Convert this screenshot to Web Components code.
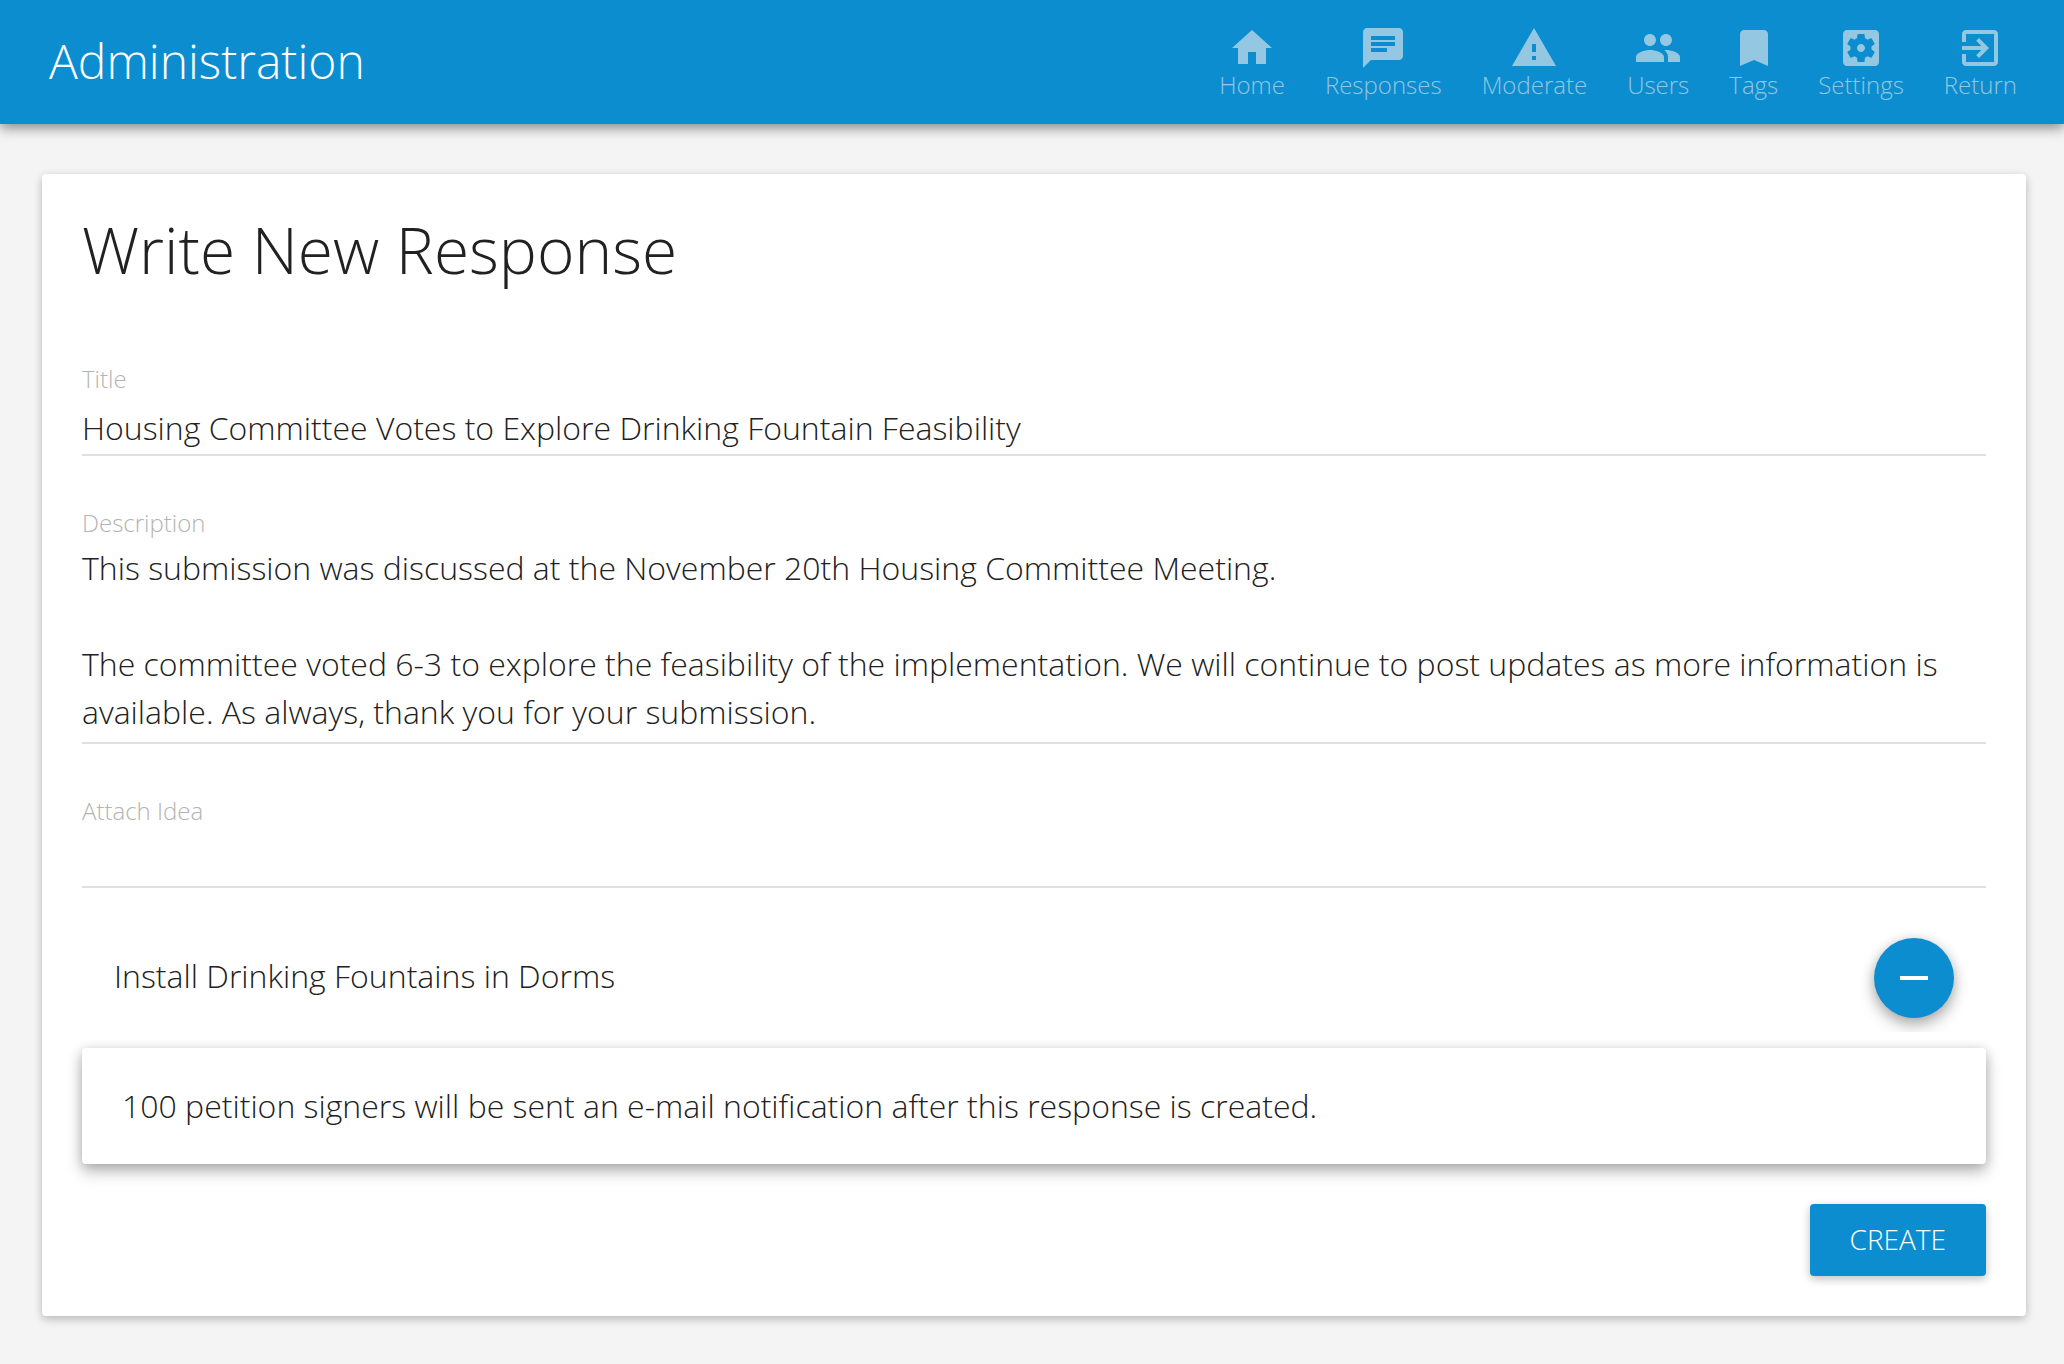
<!DOCTYPE html>
<html lang="en">
<head>
<meta charset="utf-8">
<meta name="viewport" content="width=device-width, initial-scale=1">
<title>Administration</title>
<style>
  :root {
    --primary: #0c8dd0;
    --ink: #212121;
    --hint: #b3b3b3;
    --rule: #e0e0e0;
    --inset: 40px;
    --shadow-1: 0 4px 10px rgba(0, 0, 0, .14), 0 2px 8px rgba(0, 0, 0, .12);
    --shadow-2: 0 8px 16px rgba(0, 0, 0, .24), 0 2px 12px rgba(0, 0, 0, .18);
  }
  body {
    margin: 0;
    background: #f4f4f4;
    color: var(--ink);
    font: 300 32px/48px "Open Sans", sans-serif;
  }
</style>
</head>
<body>
<admin-app></admin-app>

<script>
const ICONS = {
  home: 'M10 20v-6h4v6h5v-8h3L12 3 2 12h3v8z',
  chat: 'M20 2H4c-1.1 0-1.99.9-1.99 2L2 22l4-4h14c1.1 0 2-.9 2-2V4c0-1.1-.9-2-2-2zM6 6h12v2H6V6zm8 8H6v-2h8v2zm4-3H6V9h12v2z',
  warning: 'M1 21h22L12 2 1 21zm12-3h-2v-2h2v2zm0-4h-2v-4h2v4z',
  people: 'M16 11c1.66 0 2.99-1.34 2.99-3S17.66 5 16 5c-1.66 0-3 1.34-3 3s1.34 3 3 3zm-8 0c1.66 0 2.99-1.34 2.99-3S9.66 5 8 5C6.34 5 5 6.34 5 8s1.34 3 3 3zm0 2c-2.33 0-7 1.17-7 3.5V19h14v-2.5c0-2.33-4.67-3.5-7-3.5zm8 0c-.29 0-.62.02-.97.05 1.16.84 1.97 1.97 1.97 3.45V19h6v-2.5c0-2.33-4.67-3.5-7-3.5z',
  bookmark: 'M17 3H7c-1.1 0-1.99.9-1.99 2L5 21l7-3 7 3V5c0-1.1-.9-2-2-2z',
  settings: 'M12 10c-1.1 0-2 .9-2 2s.9 2 2 2 2-.9 2-2-.9-2-2-2zm7-7H5c-1.11 0-2 .9-2 2v14c0 1.1.89 2 2 2h14c1.11 0 2-.9 2-2V5c0-1.1-.89-2-2-2zm-1.75 9c0 .23-.02.46-.05.68l1.48 1.16c.13.11.17.3.08.45l-1.4 2.42c-.09.15-.27.21-.43.15l-1.74-.7c-.36.28-.76.51-1.18.69l-.26 1.85c-.03.17-.18.3-.35.3h-2.8c-.17 0-.32-.13-.35-.29l-.26-1.85c-.43-.18-.82-.41-1.18-.69l-1.74.7c-.16.06-.34 0-.43-.15l-1.4-2.42c-.09-.15-.05-.34.08-.45l1.48-1.16c-.03-.23-.05-.46-.05-.69 0-.23.02-.46.05-.68l-1.48-1.16c-.13-.11-.17-.3-.08-.45l1.4-2.42c.09-.15.27-.21.43-.15l1.74.7c.36-.28.76-.51 1.18-.69l.26-1.85c.03-.17.18-.3.35-.3h2.8c.17 0 .32.13.35.29l.26 1.85c.43.18.82.41 1.18.69l1.74-.7c.16-.06.34 0 .43.15l1.4 2.42c.09.15.05.34-.08.45l-1.48 1.16c.03.23.05.46.05.69z',
  exit: 'M10.09 15.59L11.5 17l5-5-5-5-1.41 1.41L12.67 11H3v2h9.67l-2.58 2.59zM19 3H5c-1.11 0-2 .9-2 2v4h2V5h14v14H5v-4H3v4c0 1.1.89 2 2 2h14c1.1 0 2-.9 2-2V5c0-1.1-.9-2-2-2z',
  remove: 'M19 13H5v-2h14v2z'
};

class BaseElement extends HTMLElement {
  connectedCallback() {
    if (this.shadowRoot) return;
    this.attachShadow({ mode: 'open' }).innerHTML = this.render();
  }
}

customElements.define('app-icon', class extends BaseElement {
  render() {
    return `<style>
      :host { display: block; width: 48px; height: 48px; }
      svg { display: block; width: 100%; height: 100%; fill: currentColor; }
    </style>
    <svg viewBox="0 0 24 24" aria-hidden="true"><path d="${ICONS[this.getAttribute('name')]}"/></svg>`;
  }
});

customElements.define('nav-link', class extends BaseElement {
  render() {
    return `<style>
      :host { display: block; }
      a { display: flex; flex-direction: column; align-items: center; padding-bottom: 2px;
          color: rgba(238, 238, 238, .6); font-size: 24px; line-height: 26px; text-decoration: none; }
      a:hover { color: #fff; }
    </style>
    <a href="${this.getAttribute('href')}"><app-icon name="${this.getAttribute('icon')}"></app-icon><span><slot></slot></span></a>`;
  }
});

customElements.define('app-header', class extends BaseElement {
  render() {
    return `<style>
      :host { display: block; }
      header { display: flex; justify-content: space-between; align-items: center; min-height: 124px;
               padding: 0 47px 0 49px; background: var(--primary); color: #fff;
               box-shadow: 0 4px 12px rgba(0, 0, 0, .45); }
      .brand { padding-bottom: 3px; font-size: 48px; line-height: 64px; }
      nav { display: flex; gap: 40px; }
    </style>
    <header><div class="brand"><slot></slot></div><nav aria-label="Administration"><slot name="nav"></slot></nav></header>`;
  }
});

customElements.define('page-card', class extends BaseElement {
  render() {
    return `<style>
      :host { display: block; padding: var(--inset); background: #fff; border-radius: 4px; box-shadow: var(--shadow-1); }
      h1 { margin: 0 0 74px; font-size: 64px; line-height: 72px; font-weight: 300; }
    </style>
    <h1>${this.getAttribute('heading')}</h1><slot></slot>`;
  }
});

customElements.define('form-field', class extends BaseElement {
  render() {
    const value = this.getAttribute('value') || '';
    const rows = this.getAttribute('rows');
    return `<style>
      :host { display: block; }
      label { display: block; margin-bottom: 2px; color: var(--hint); font-size: 24px; line-height: 38px; }
      input, textarea { display: block; box-sizing: border-box; width: 100%; margin: 0; border: 0;
        border-bottom: 2px solid var(--rule); border-radius: 0; outline: 0; background: none;
        color: inherit; font: inherit; resize: none; overflow: hidden; }
      input { height: 56px; padding: 2px 0; }
      textarea { padding: 0 0 6px; }
      input:focus, textarea:focus { border-color: var(--primary); }
    </style>
    <label for="control">${this.getAttribute('label')}</label>
    ${rows ? `<textarea id="control" rows="${rows}">${value}</textarea>`
           : `<input id="control" type="text" value="${value}">`}`;
  }
});

customElements.define('attached-idea', class extends BaseElement {
  render() {
    return `<style>
      :host { display: flex; align-items: center; justify-content: space-between; padding: 14px 32px; overflow: hidden; }
      span { padding-bottom: 4px; }
      button { display: flex; align-items: center; justify-content: center; flex: none; width: 80px; height: 80px;
        padding: 0; border: 0; border-radius: 50%; background: var(--primary); color: #fff;
        box-shadow: var(--shadow-2); cursor: pointer; }
    </style>
    <span><slot></slot></span>
    <button type="button" aria-label="Remove"><app-icon name="remove"></app-icon></button>`;
  }
});

customElements.define('notice-box', class extends BaseElement {
  render() {
    return `<style>
      :host { display: block; padding: 34px var(--inset); background: #fff; border-radius: 4px; box-shadow: var(--shadow-2); }
    </style><slot></slot>`;
  }
});

customElements.define('raised-button', class extends BaseElement {
  render() {
    return `<style>
      :host { display: block; }
      button { padding: 15px var(--inset) 17px; border: 0; border-radius: 4px; background: var(--primary); color: #fff;
        font: inherit; font-size: 28px; line-height: 40px; text-transform: uppercase; display: block;
        box-shadow: var(--shadow-1); cursor: pointer; }
    </style>
    <button type="button"><slot></slot></button>`;
  }
});

customElements.define('admin-app', class extends BaseElement {
  render() {
    return `<style>
      :host { display: block; }
      main { padding: 50px 38px 48px 42px; }
      .fields { display: flex; flex-direction: column; gap: 48px; }
      attached-idea { margin: 36px 0 16px; }
      .actions { display: flex; justify-content: flex-end; margin-top: 40px; }
    </style>
    <app-header>Administration
      <nav-link slot="nav" href="#home" icon="home">Home</nav-link>
      <nav-link slot="nav" href="#responses" icon="chat">Responses</nav-link>
      <nav-link slot="nav" href="#moderate" icon="warning">Moderate</nav-link>
      <nav-link slot="nav" href="#users" icon="people">Users</nav-link>
      <nav-link slot="nav" href="#tags" icon="bookmark">Tags</nav-link>
      <nav-link slot="nav" href="#settings" icon="settings">Settings</nav-link>
      <nav-link slot="nav" href="#return" icon="exit">Return</nav-link>
    </app-header>
    <main>
      <page-card heading="Write New Response">
        <div class="fields">
          <form-field label="Title" value="Housing Committee Votes to Explore Drinking Fountain Feasibility"></form-field>
          <form-field label="Description" rows="4" value="This submission was discussed at the November 20th Housing Committee Meeting.&#10;&#10;The committee voted 6-3 to explore the feasibility of the implementation. We will continue to post updates as more information is available. As always, thank you for your submission."></form-field>
          <form-field label="Attach Idea"></form-field>
        </div>
        <attached-idea>Install Drinking Fountains in Dorms</attached-idea>
        <notice-box>100 petition signers will be sent an e-mail notification after this response is created.</notice-box>
        <div class="actions"><raised-button>Create</raised-button></div>
      </page-card>
    </main>`;
  }
});
</script>
</body>
</html>
